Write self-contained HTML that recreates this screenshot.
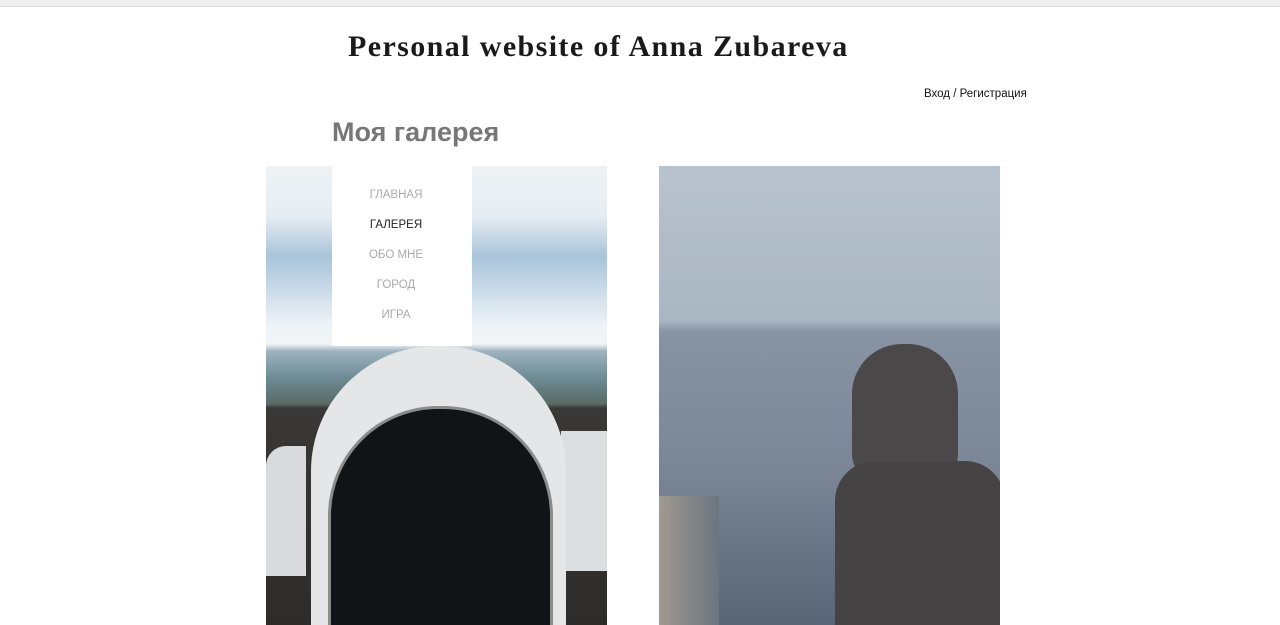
<!DOCTYPE html>
<html><head><meta charset="utf-8"><style>
*{margin:0;padding:0;box-sizing:border-box}
body{width:1280px;height:625px;overflow:hidden;background:#fff;position:relative;font-family:"Liberation Sans",sans-serif}
.top{position:absolute;left:0;top:0;width:1280px;height:7px;background:#f0f0f0;border-bottom:1px solid #ddd}
h1{position:absolute;left:348px;top:30px;font-family:"Liberation Serif",serif;font-weight:bold;font-size:30px;color:#1a1a1a;letter-spacing:1.4px;white-space:nowrap}
.login{position:absolute;left:924px;top:88px;font-size:11.5px;color:#111}
h2{position:absolute;left:332px;top:117px;font-size:27px;font-weight:bold;color:#777}
.img{position:absolute;overflow:hidden}
.menu{position:absolute;left:332px;top:166px;width:140px;height:180px;background:#fff;text-align:center;font-size:11.5px;color:#aaa;padding-right:12px}
.menu div{height:30px;line-height:30px}
.menu div:first-child{margin-top:14px}
</style></head><body>
<div class="top"></div>
<h1>Personal website of Anna Zubareva</h1>
<div class="login">Вход / Регистрация</div>
<h2>Моя галерея</h2>
<div class="img" style="left:266px;top:166px;width:341px;height:459px;background:linear-gradient(#eef2f5 0,#e6edf2 50px,#a9c4da 90px,#c6d8e6 120px,#eef3f7 160px,#f2f5f7 178px,#9fb3bf 185px,#6f8e98 210px,#5a6a66 238px,#3a3836 242px,#2e2c2a 459px)">
  <div style="position:absolute;left:0;top:280px;width:40px;height:130px;background:#d8dadb;border-radius:20px 0 0 0"></div>
  <div style="position:absolute;left:295px;top:265px;width:46px;height:140px;background:#dcdedf"></div>
  <div style="position:absolute;left:45px;top:180px;width:255px;height:290px;background:#e4e6e7;border-radius:125px 125px 0 0"></div>
  <div style="position:absolute;left:62px;top:240px;width:225px;height:230px;background:#111416;border-radius:110px 110px 0 0;border:3px solid #8a8c8c"></div>
</div>
<div class="menu"><div>ГЛАВНАЯ</div><div style="color:#222">ГАЛЕРЕЯ</div><div>ОБО МНЕ</div><div>ГОРОД</div><div>ИГРА</div></div>
<div class="img" style="left:659px;top:166px;width:341px;height:459px;background:linear-gradient(#b8c3cd 0,#aab6c2 155px,#8894a3 165px,#7b8797 300px,#596575 459px)">
  <div style="position:absolute;left:0;top:330px;width:60px;height:130px;background:linear-gradient(90deg,#a09a90,#6b7480)"></div>
  <div style="position:absolute;left:193px;top:178px;width:106px;height:140px;background:#4a4849;border-radius:50px 50px 30px 30px"></div>
  <div style="position:absolute;left:176px;top:295px;width:170px;height:170px;background:#454344;border-radius:40px 40px 0 0"></div>
</div>
</body></html>
